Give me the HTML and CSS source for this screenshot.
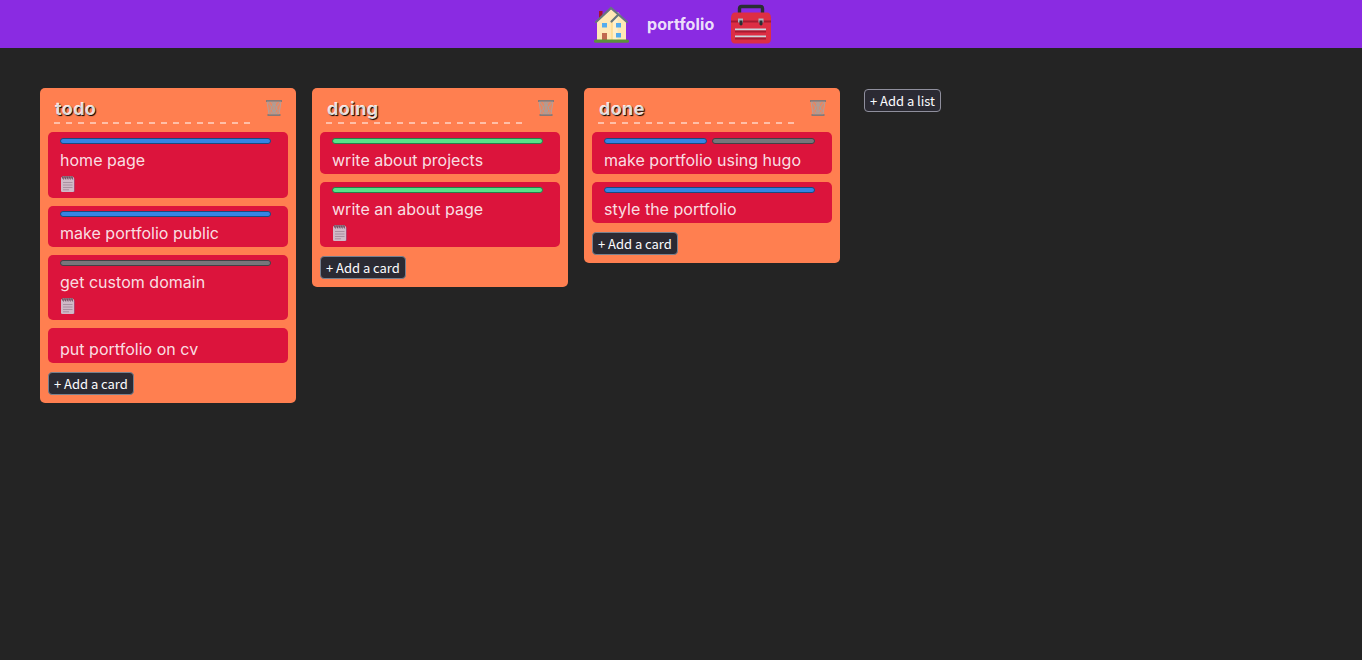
FILE: index.html
```html
<!DOCTYPE html>
<html lang="en">
<head>
<meta charset="utf-8">
<title>portfolio</title>
<link rel="stylesheet" href="styles.css">
</head>
<body>
<svg class="sprites" aria-hidden="true">
  <symbol id="trash" viewBox="0 0 18 18">
    <path d="M2.2 2h13.6L14 16H4z" fill="#a99a94" fill-opacity=".3"/>
    <path d="M3 3l4 6-2.500 3 3 3M6.500 3l3.500 6-4 6M10 3L6 9l4 6M15 3l-4 6 2.500 3-3 3M11.500 3L8 9l4 6M8 3l4 6-4 6" fill="none" stroke="#a9a09c" stroke-width="1"/>
    <path d="M2 2.500L4 15.500M16 2.500L14 15.500" stroke="#b5a09a"/>
    <path d="M1 1h16v2H1zM2.500 15h13v2h-13z" fill="#887875"/>
    <path d="M2 2.500h14M3.500 15.500h11" stroke="#a0908b" stroke-width=".6"/>
  </symbol>
  <symbol id="note" viewBox="0 0 16 18">
    <path d="M2 3h11.500q1 0 1 1v12q0 1-1 1H3z" fill="#8b68a0"/>
    <rect x="1" y="2" width="13" height="15" rx="1.300" fill="#d0b9c7"/>
    <path d="M2 1h11v2.500H2z" fill="#94707f"/>
    <path d="M2.500 1.500l1 3M4.800 1.500l1 3M7.100 1.500l1 3M9.400 1.500l1 3M11.700 1.500l1 3" stroke="#684b5c" stroke-width=".9"/>
    <path d="M3 7.500h9.500M3 10h9.500M3 12.500h9.500M3 14.800h6" stroke="#a58b9c" stroke-width=".9"/>
  </symbol>
</svg>
<header class="topbar">
  <svg class="house" viewBox="0 0 36 38">
    <path d="M5 6h3.500v10H5z" fill="#a8122e"/>
    <path d="M3 17L17 4l5 4 2-1 8 10v19H3z" fill="#ffe8b6"/>
    <path d="M17.500 18l6-7v25h-6z" fill="#fff0cc"/>
    <path d="M18 16v20" stroke="#ffd983" stroke-width="1.300"/>
    <path d="M2 17L17 3l16 14M17.500 16.500l7-7" fill="none" stroke="#66757f" stroke-width="2.200" stroke-linecap="round"/>
    <path d="M8 18h5v4.500H8zM22 18h5v4.500h-5zM22 28h5v4.500h-5z" fill="#55acee"/>
    <path d="M8 28h5v7H8z" fill="#c1694f"/>
    <rect y="34.500" width="35" height="3.300" rx="1.600" fill="#5c913b"/>
  </svg>
  <h1 class="board-name">portfolio</h1>
  <svg class="toolbox" viewBox="0 0 42 40">
    <path d="M8.500 10.500V4.500Q8.500 2.500 10.500 2.500h19Q31.500 2.500 31.500 4.500v6" fill="none" stroke="#292f33" stroke-width="3.400"/>
    <path d="M4 8.500h32q3.500 0 4 5v21q0 5-4 5H4q-4 0-4-5v-21q.5-5 4-5z" fill="#dd2e44"/>
    <path d="M0 16.500h40v2H0z" fill="#a51b32"/>
    <path d="M7 14.500h5v4H7zM27.500 14.500h5v4h-5z" fill="#aab8c2"/>
    <path d="M8.500 16.500h3v4q-1.500 2-3 0zM28.500 16.500h3v4q-1.500 2-3 0z" fill="#292f33"/>
    <path d="M4 25.500h31M4 32.500h31" stroke="#ccd6dd" stroke-width="2"/>
    <path d="M4 27.500h31M4 34.500h31" stroke="#a51b32" stroke-width="2"/>
  </svg>
</header>
<main class="board">
  <section class="list">
    <div class="list-head"><h2 class="list-title">todo</h2><svg class="trash"><use href="#trash"/></svg></div>
    <div class="cards">
      <article class="card"><div class="labels"><i class="label blue"></i></div><p class="text">home page</p><svg class="note"><use href="#note"/></svg></article>
      <article class="card"><div class="labels"><i class="label blue"></i></div><p class="text">make portfolio public</p></article>
      <article class="card"><div class="labels"><i class="label gray"></i></div><p class="text">get custom domain</p><svg class="note"><use href="#note"/></svg></article>
      <article class="card"><div class="labels"></div><p class="text">put portfolio on cv</p></article>
    </div>
    <button class="add">+ Add a card</button>
  </section>
  <section class="list">
    <div class="list-head"><h2 class="list-title">doing</h2><svg class="trash"><use href="#trash"/></svg></div>
    <div class="cards">
      <article class="card"><div class="labels"><i class="label green"></i></div><p class="text">write about projects</p></article>
      <article class="card"><div class="labels"><i class="label green"></i></div><p class="text">write an about page</p><svg class="note"><use href="#note"/></svg></article>
    </div>
    <button class="add">+ Add a card</button>
  </section>
  <section class="list">
    <div class="list-head"><h2 class="list-title">done</h2><svg class="trash"><use href="#trash"/></svg></div>
    <div class="cards">
      <article class="card"><div class="labels"><i class="label blue"></i><i class="label gray"></i></div><p class="text">make portfolio using hugo</p></article>
      <article class="card"><div class="labels"><i class="label blue"></i></div><p class="text">style the portfolio</p></article>
    </div>
    <button class="add">+ Add a card</button>
  </section>
  <button class="add add-list">+ Add a list</button>
</main>
</body>
</html>
```
FILE: styles.css
```css
* { box-sizing: border-box; }
body { margin: 0; min-height: 100vh; background: #242424; color: rgba(255, 255, 255, .87); font: 16px/24px Inter, sans-serif; }
h1, h2, p { margin: 0; }
svg { display: block; flex: none; }
.sprites { display: none; }
.topbar { height: 48px; background: #8a2be2; display: flex; align-items: center; padding-left: 594px; }
.house { width: 36px; height: 38px; }
.board-name { width: 68px; margin: 0 16px 0 17px; font: 700 16px/24px Inter, sans-serif; letter-spacing: .1px; white-space: nowrap; }
.toolbox { width: 42px; height: 40px; }
.board { display: flex; align-items: flex-start; gap: 16px; padding: 40px; }
.list { width: 256px; padding: 0 8px 8px; border-radius: 5px; background: coral; }
.list-head { height: 44.3px; padding: 7px 5px 0 6px; display: flex; justify-content: space-between; }
.list-title { width: 196px; height: 29px; padding: 1px 0 0 1px; background: repeating-linear-gradient(90deg, rgba(255, 255, 255, .5) 0 6px, transparent 6px 11.880px) bottom / 100% 2px no-repeat; font: 700 18px/25px Inter, sans-serif; letter-spacing: .35px; text-shadow: 1px 1px 1px #000; }
.trash { width: 18px; height: 18px; margin-top: 4px; }
.cards { display: flex; flex-direction: column; gap: 8px; }
.card { padding: 5.5px 12px 1.8px; border-radius: 5px; background: crimson; }
.labels { display: flex; gap: 5px; width: 211px; }
.label { flex: 1; height: 6px; border: 1px solid; border-radius: 3px; }
.blue { background: #3584e4; border-color: #1a4a80; }
.green { background: #57e389; border-color: #26804a; }
.gray { background: #77767b; border-color: #424146; }
.text { margin-top: 4px; letter-spacing: .02px; }
.labels:empty + .text { margin-top: 3.700px; }
.note { width: 16px; height: 18px; margin: 3px 0; }
.add { display: block; height: 23px; margin-top: 9px; padding: 0 5px; border: 1px solid #77808f; border-radius: 4px; background: #2b2a33; color: #fbfbfe; font: 13px/19px "Noto Sans CJK JP", sans-serif; letter-spacing: -.03px; white-space: nowrap; }
.add-list { margin: 1px 0 0 8px; border-color: #8f8f9d; }
```
